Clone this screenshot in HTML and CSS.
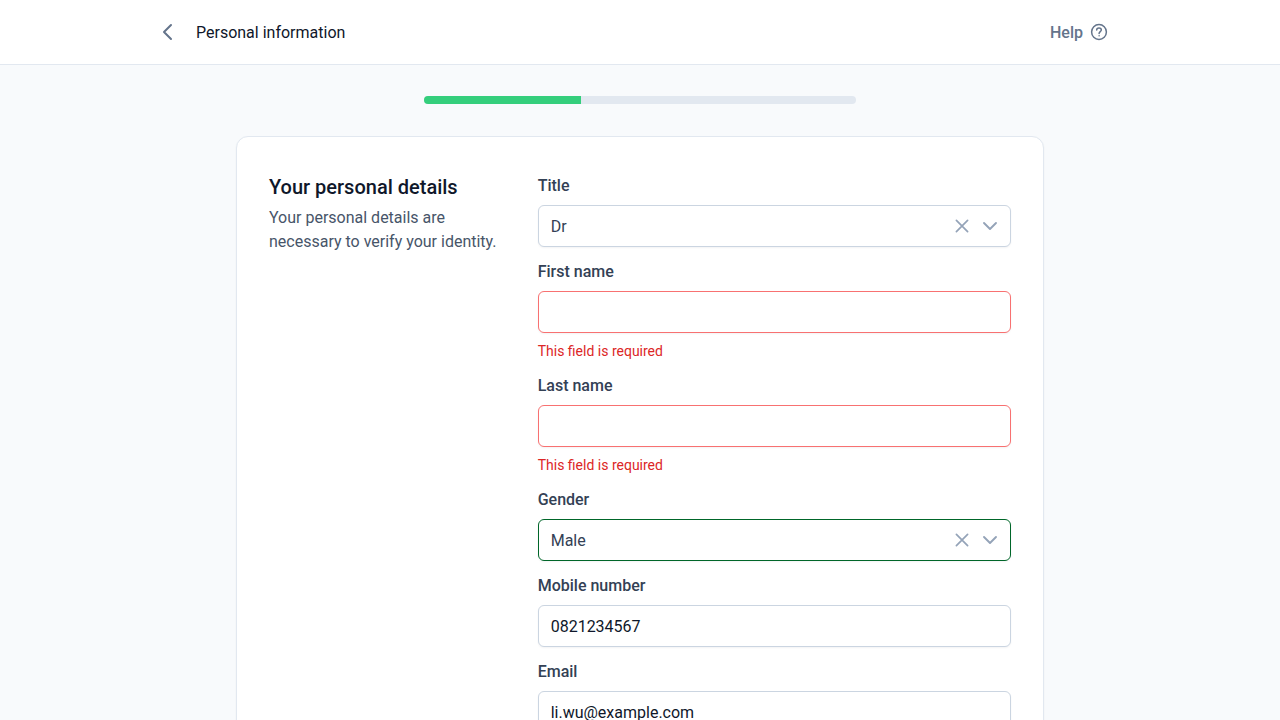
FILE: index.html
```html
<!DOCTYPE html>
<html lang="en">
<head>
<meta charset="utf-8">
<meta name="viewport" content="width=device-width, initial-scale=1">
<title>Personal information</title>
<link rel="stylesheet" href="styles.css">
</head>
<body>
<header class="topbar">
  <div class="topbar-inner">
    <div class="topbar-start">
      <button class="back" type="button" aria-label="Back">
        <svg class="icon-lg" viewBox="0 0 24 24"><path d="M15 19l-7-7 7-7"/></svg>
      </button>
      <h1 class="page-title">Personal information</h1>
    </div>
    <button class="help" type="button">
      Help
      <svg class="icon-md icon-help" viewBox="0 0 20 20"><circle cx="10" cy="10" r="7.4"/><path d="M7.7 8.1c0-1.2 1-2.1 2.3-2.1s2.3.9 2.3 2c0 1.5-2.2 1.7-2.2 3.4M10.1 13.7v.1"/></svg>
    </button>
  </div>
</header>
<main class="content">
  <div class="progress" role="progressbar" aria-label="Progress" aria-valuemin="0" aria-valuemax="11" aria-valuenow="4">
    <div class="progress-fill" style="width: 36.36%"></div>
  </div>
  <form class="card">
    <div class="intro">
      <h2 class="intro-title">Your personal details</h2>
      <p class="intro-text">Your personal details are necessary to verify your identity.</p>
    </div>
    <div class="fields">
      <div class="field">
        <label class="label" for="title">Title</label>
        <div class="select-wrap">
          <select class="control select" id="title"><option>Dr</option></select>
          <div class="select-actions">
            <button class="clear" type="button" aria-label="Clear title"><svg class="icon-md" viewBox="0 0 20 20"><path d="m4.4 4.4 11.2 11.2M15.6 4.4 4.4 15.6"/></svg></button>
            <svg class="icon-md chevron" viewBox="0 0 20 20"><path d="m4 7 6 6 6-6"/></svg>
          </div>
        </div>
      </div>
      <div class="field">
        <label class="label" for="first-name">First name</label>
        <input class="control invalid" id="first-name" type="text" aria-invalid="true" aria-describedby="first-name-error">
        <p class="error" id="first-name-error">This field is required</p>
      </div>
      <div class="field">
        <label class="label" for="last-name">Last name</label>
        <input class="control invalid" id="last-name" type="text" aria-invalid="true" aria-describedby="last-name-error">
        <p class="error" id="last-name-error">This field is required</p>
      </div>
      <div class="field">
        <label class="label" for="gender">Gender</label>
        <div class="select-wrap">
          <select class="control select active" id="gender"><option>Male</option></select>
          <div class="select-actions">
            <button class="clear" type="button" aria-label="Clear gender"><svg class="icon-md" viewBox="0 0 20 20"><path d="m4.4 4.4 11.2 11.2M15.6 4.4 4.4 15.6"/></svg></button>
            <svg class="icon-md chevron" viewBox="0 0 20 20"><path d="m4 7 6 6 6-6"/></svg>
          </div>
        </div>
      </div>
      <div class="field">
        <label class="label" for="mobile">Mobile number</label>
        <input class="control" id="mobile" type="tel" value="0821234567">
      </div>
      <div class="field">
        <label class="label" for="email">Email</label>
        <input class="control" id="email" type="email" value="li.wu@example.com">
      </div>
    </div>
  </form>
</main>
</body>
</html>
```
FILE: styles.css
```css
*, *::before, *::after { box-sizing: border-box; }

body {
  margin: 0;
  background: #f8fafc;
  color: #0f172a;
  font: 400 16px/24px Roboto, "Liberation Sans", sans-serif;
}

h1, h2, p { margin: 0; }

button {
  display: flex;
  align-items: center;
  padding: 0;
  border: 0;
  background: none;
  color: inherit;
  font: inherit;
  cursor: pointer;
}

svg {
  display: block;
  flex: none;
  fill: none;
  stroke: currentColor;
  stroke-width: 1.7;
  stroke-linecap: round;
  stroke-linejoin: round;
}

.icon-lg { width: 24px; height: 24px; stroke-width: 2; }
.icon-md { width: 20px; height: 20px; }
.icon-help { stroke-width: 1.5; }
.chevron { stroke-width: 1.9; }

.topbar {
  background: #fff;
  border-bottom: 1px solid #e2e8f0;
}

.topbar-inner {
  display: flex;
  align-items: center;
  justify-content: space-between;
  max-width: 1000px;
  min-height: 64px;
  margin: 0 auto;
  padding: 0 16px;
  line-height: 25px;
}

.topbar-start {
  display: flex;
  align-items: center;
  gap: 16px;
}

.back { color: #64748b; }

.page-title {
  font-size: 16px;
  font-weight: 400;
}

.help {
  gap: 6px;
  padding: 8px 15px;
  color: #64748b;
  font-weight: 500;
}

.content {
  display: flex;
  flex-direction: column;
  align-items: center;
  gap: 32px;
  padding: 31px 16px 48px;
}

.progress {
  width: 100%;
  max-width: 432px;
  height: 8px;
  overflow: hidden;
  border-radius: 4px;
  background: #e2e8f0;
}

.progress-fill {
  height: 100%;
  background: #34ce7c;
}

.card {
  display: grid;
  grid-template-columns: 1fr 2fr;
  gap: 32px;
  width: 100%;
  max-width: 808px;
  padding: 36px 32px;
  border: 1px solid #e2e8f0;
  border-radius: 12px;
  background: #fff;
  box-shadow: 0 1px 2px rgba(15, 23, 42, 0.05);
}

.intro-title {
  font-size: 20px;
  font-weight: 500;
  line-height: 28px;
}

.intro-text {
  margin-top: 5px;
  color: #475569;
}

.fields {
  display: flex;
  flex-direction: column;
  gap: 12px;
}

.field {
  display: flex;
  flex-direction: column;
}

.label {
  margin-bottom: 7px;
  color: #334155;
  font-weight: 500;
  line-height: 25px;
}

.control {
  display: block;
  width: 100%;
  height: 42px;
  padding: 8px 12px;
  border: 1px solid #cbd5e1;
  border-radius: 6px;
  outline: none;
  background: #fff;
  box-shadow: 0 1px 2px rgba(15, 23, 42, 0.05);
  color: #0f172a;
  font: inherit;
}

.control:focus { border-color: #166534; }
.invalid { border-color: #f87171; }
.active { border-color: #006629; }

.select-wrap { position: relative; }

.select {
  appearance: none;
  padding: 9px 64px 7px 12px;
  color: #334155;
}

.select-actions {
  position: absolute;
  top: 0;
  right: 11px;
  bottom: 0;
  display: flex;
  align-items: center;
  gap: 8px;
  color: #94a3b8;
  pointer-events: none;
}

.clear { pointer-events: auto; }

.error {
  margin-top: 8px;
  color: #dc2626;
  font-size: 14px;
  line-height: 20px;
}

@media (max-width: 640px) {
  .card { grid-template-columns: 1fr; }
}
```
